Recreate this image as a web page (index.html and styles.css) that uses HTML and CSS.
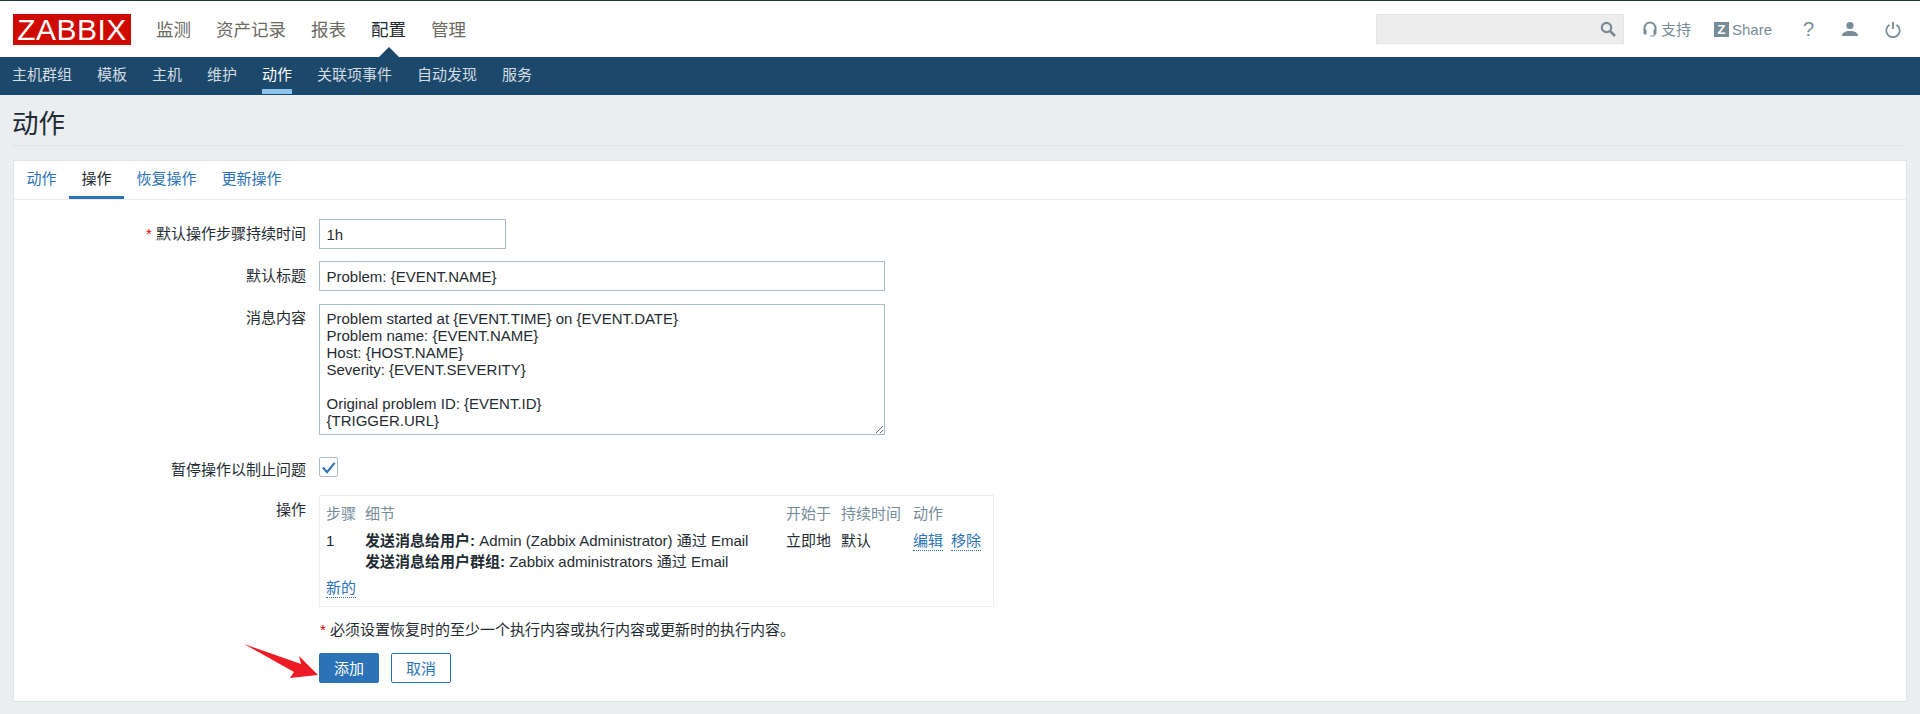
FILE: index.html
```html
<!DOCTYPE html>
<html lang="zh-CN">
<head>
<meta charset="utf-8">
<title>动作</title>
<link rel="stylesheet" href="styles.css">
</head>
<body>
<header class="top">
  <div class="logo">ZABBIX</div>
  <nav class="menu">
    <a>监测</a><a>资产记录</a><a>报表</a><a class="on">配置</a><a>管理</a>
  </nav>
  <div class="tools">
    <div class="search">
      <svg class="search-icon" viewBox="0 0 16 16"><circle cx="6.500" cy="6.500" r="4.700" fill="none" stroke="#7a8b96" stroke-width="2.200"/><path d="M10 10l5 5" stroke="#7a8b96" stroke-width="2.600"/></svg>
    </div>
    <a class="tool support"><svg viewBox="0 0 14 16" class="ic-head"><path d="M1.500 9V7a5.500 5.500 0 0 1 11 0v2" fill="none" stroke="#768d99" stroke-width="2"/><path d="M0.500 8.500h3v5h-1.500a1.500 1.500 0 0 1-1.500-1.500zM13.500 8.500h-3v5h1.500a1.500 1.500 0 0 0 1.500-1.500z" fill="#768d99"/><path d="M7 15h4l1-2" fill="none" stroke="#768d99" stroke-width="1.200"/></svg>支持</a>
    <a class="tool share"><span class="zbox">Z</span>Share</a>
    <a class="glyph">?</a>
    <svg class="ic-user" viewBox="0 0 16 16"><circle cx="8" cy="4.500" r="3.600" fill="#768d99"/><path d="M0 15c0-3.500 3.500-5 8-5s8 1.500 8 5z" fill="#768d99"/></svg>
    <svg class="ic-power" viewBox="0 0 16 16"><path d="M4.500 3.300a6.700 6.700 0 1 0 7 0" fill="none" stroke="#768d99" stroke-width="1.700"/><path d="M8 0.500v7" stroke="#768d99" stroke-width="1.800"/></svg>
  </div>
</header>
<nav class="sub">
  <a>主机群组</a><a>模板</a><a>主机</a><a>维护</a><a class="on">动作</a><a>关联项事件</a><a>自动发现</a><a>服务</a>
</nav>
<main class="page">
  <h1 class="title">动作</h1>
  <section class="card">
    <div class="tabs">
      <a>动作</a><a class="on">操作</a><a>恢复操作</a><a>更新操作</a>
    </div>
    <form class="form">
      <div class="row r1">
        <label class="lbl"><span class="star">*</span> 默认操作步骤持续时间</label>
        <input class="field short" value="1h">
      </div>
      <div class="row r2">
        <label class="lbl">默认标题</label>
        <input class="field long" value="Problem: {EVENT.NAME}">
      </div>
      <div class="row r3">
        <label class="lbl">消息内容</label>
        <textarea class="field long area">Problem started at {EVENT.TIME} on {EVENT.DATE}
Problem name: {EVENT.NAME}
Host: {HOST.NAME}
Severity: {EVENT.SEVERITY}

Original problem ID: {EVENT.ID}
{TRIGGER.URL}</textarea>
      </div>
      <div class="row r4">
        <label class="lbl">暂停操作以制止问题</label>
        <span class="check"><svg viewBox="0 0 16 16"><path d="M2 8l4.500 5L14.500 3" fill="none" stroke="#2b73b6" stroke-width="2.200"/></svg></span>
      </div>
      <div class="row r5">
        <label class="lbl">操作</label>
        <div class="ops">
          <div class="ops-grid">
            <span class="th">步骤</span><span class="th">细节</span><span class="th">开始于</span><span class="th">持续时间</span><span class="th">动作</span>
            <span>1</span>
            <div class="detail">
              <div><b>发送消息给用户:</b> Admin (Zabbix Administrator) 通过 Email</div>
              <div><b>发送消息给用户群组:</b> Zabbix administrators 通过 Email</div>
            </div>
            <span>立即地</span><span>默认</span>
            <span class="acts"><a class="dot">编辑</a><a class="dot">移除</a></span>
          </div>
          <a class="dot new">新的</a>
        </div>
      </div>
      <p class="note"><span class="star">*</span> 必须设置恢复时的至少一个执行内容或执行内容或更新时的执行内容。</p>
      <div class="btns">
        <button type="button" class="btn primary">添加</button>
        <button type="button" class="btn ghost">取消</button>
      </div>
      <svg class="arrow" viewBox="0 0 76 36"><path d="M0 0L57 20L55 12L74 31L46 34L50 28Z" fill="#ed1c24"/></svg>
    </form>
  </section>
</main>
</body>
</html>
```
FILE: styles.css
```css
* { box-sizing: border-box; }
html, body { margin: 0; height: 714px; overflow: hidden; }
body {
  background: #ebeef0;
  color: #1f2c33;
  font: 15px/17px "Liberation Sans", "Noto Sans CJK SC", sans-serif;
}
a { color: inherit; text-decoration: none; }

.top {
  height: 57px;
  background: #fff;
  border-top: 1px solid #27363f;
  display: flex;
  align-items: flex-start;
  padding-left: 13px;
  position: relative;
}
.logo {
  width: 118px;
  height: 31px;
  margin-top: 13px;
  background: #cf0a00;
  color: #fff;
  font-size: 30px;
  line-height: 32px;
  text-align: center;
  letter-spacing: .5px;
}
.menu { display: flex; gap: 25px; margin: 17px 0 0 25px; font-size: 17.500px; line-height: 24px; color: #6a6a60; }
.menu .on { color: #1f2c33; position: relative; }
.menu .on::after {
  content: "";
  position: absolute;
  left: 8px;
  top: 29px;
  border: 10px solid transparent;
  border-top: 0;
  border-bottom-color: #1b486b;
}
.tools { margin-left: auto; display: flex; align-items: center; height: 30px; margin-top: 13px; padding-right: 19px; color: #768d99; }
.search {
  width: 248px;
  height: 30px;
  background: #ededed;
  border: 1px solid #e4e4e4;
  display: flex;
  justify-content: flex-end;
  align-items: center;
  padding-right: 7px;
  margin-right: 19px;
}
.search-icon { width: 16px; height: 16px; }
.tool { display: flex; align-items: center; font-size: 15px; }
.ic-head { width: 14px; height: 16px; margin-right: 4px; }
.support { margin-right: 23px; }
.zbox {
  width: 15px; height: 15px;
  background: #768d99; color: #fff;
  font: bold 13px/15px "Liberation Sans", sans-serif;
  text-align: center;
  margin-right: 3px;
}
.share { margin-right: 31px; }
.glyph { font-size: 20px; width: 9px; margin-right: 30px; }
.ic-user { width: 16px; height: 16px; margin-right: 27px; }
.ic-power { width: 16px; height: 17px; }

.sub {
  height: 38px;
  background: #1b486b;
  display: flex;
  gap: 25px;
  padding: 0 12px;
  color: #d5dde2;
  font-size: 15px;
  line-height: 36px;
}
.sub a { height: 37px; }
.sub .on { color: #fff; border-bottom: 5px solid #8dc4ee; }

.page { padding: 0 13px; }
.title {
  margin: 0 0 0 -1px;
  height: 51px;
  padding-top: 7px;
  border-bottom: 1px solid #dfe4e7;
  font-size: 26.500px;
  font-weight: 400;
  line-height: 44px;
  color: #1f2c33;
}
.card {
  margin-top: 14px;
  height: 542px;
  background: #fff;
  border: 1px solid #dfe4e7;
}
.tabs {
  height: 39px;
  display: flex;
  border-bottom: 1px solid #ebeef0;
  color: #2b73b6;
  line-height: 35px;
}
.tabs a { padding: 0 12.500px; height: 38px; }
.tabs .on { color: #1f2c33; border-bottom: 3px solid #2b73b6; }

.form { position: relative; }
.row { display: flex; align-items: flex-start; }
.lbl { width: 292px; text-align: right; padding-top: 6px; margin-right: 13px; flex: none; }
.star { color: #d40000; }
.field {
  height: 30px;
  border: 1px solid #acbbc7;
  background: #fff;
  color: #1f2c33;
  font: 15px/17px "Liberation Sans", "Noto Sans CJK SC", sans-serif;
  padding: 5px 6.500px;
  outline: 0;
  display: block;
  border-radius: 0;
}
.short { width: 187px; }
.long { width: 566px; }
.area { height: 131px; resize: both; overflow: hidden; }
.r1 { margin-top: 19px; }
.r2 { margin-top: 12px; }
.r3 { margin-top: 13px; }
.r3 .lbl { padding-top: 5px; }
.r4 { margin-top: 22px; }
.r4 .lbl { padding-top: 4px; }
.check {
  width: 19px; height: 20px;
  border: 1px solid #acbbc7;
  border-radius: 2px;
  display: flex; align-items: center; justify-content: center;
}
.check svg { width: 15px; height: 15px; }
.r5 { margin-top: 17px; }
.r5 .lbl { padding-top: 6px; }
.ops {
  width: 675px;
  height: 112px;
  border: 1px solid #ebeef0;
  padding: 9px 6px 0;
}
.ops-grid {
  display: grid;
  grid-template-columns: 39px 421px 55px 72px 1fr;
  grid-auto-rows: min-content;
  row-gap: 10px;
}
.th { color: #768d99; }
.detail > div + div { margin-top: 4px; }
.detail b { font-weight: 700; }
.acts { display: flex; gap: 8px; }
.dot { color: #2b73b6; border-bottom: 1px dotted #2b73b6; display: inline-block; height: 19px; }
.new { margin-top: 9px; }
.note { margin: 14px 0 0 306px; }
.btns { display: flex; gap: 12px; margin: 15px 0 0 305px; }
.btn {
  width: 60px;
  height: 30px;
  border-radius: 2px;
  font: 15px/17px "Liberation Sans", "Noto Sans CJK SC", sans-serif;
  padding: 0;
}
.primary { background: #2b73b6; border: 1px solid #2b73b6; color: #fff; }
.ghost { background: #fff; border: 1px solid #2b73b6; color: #2b73b6; }
.arrow { position: absolute; left: 230px; top: 425px; width: 76px; height: 36px; }
```
